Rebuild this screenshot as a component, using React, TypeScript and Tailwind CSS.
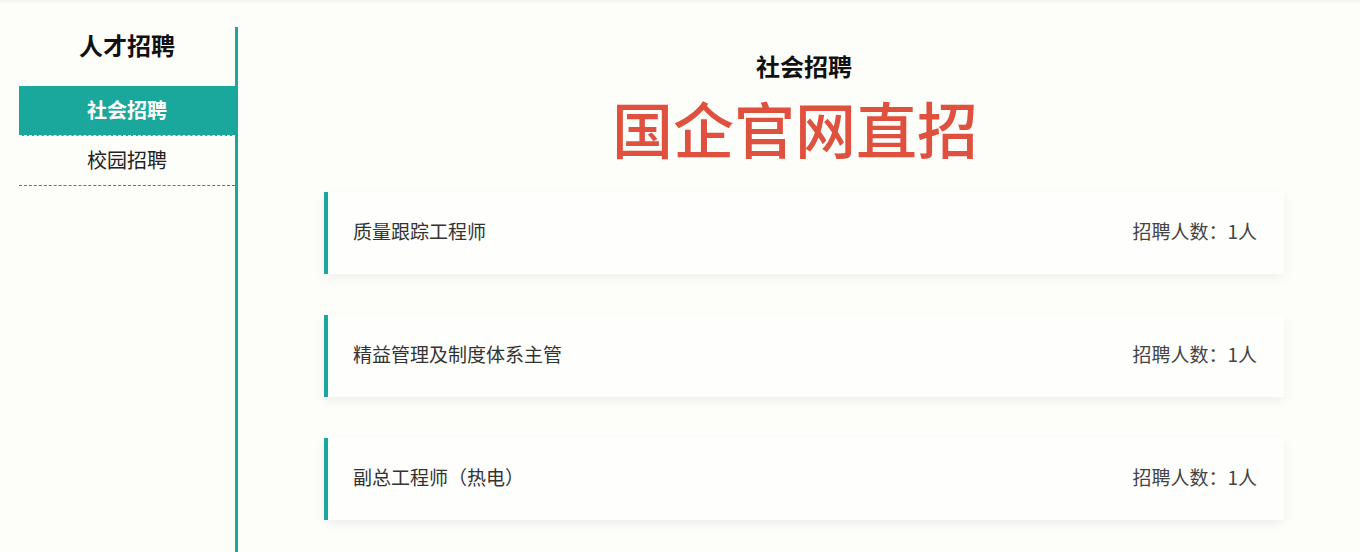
const jobs = [
  { title: '质量跟踪工程师', count: 1 },
  { title: '精益管理及制度体系主管', count: 1 },
  { title: '副总工程师（热电）', count: 1 },
];

const font = { fontFamily: '"Noto Sans CJK SC", "Noto Sans", sans-serif' };

export default function App() {
  return (
    <div className="h-[552px] overflow-hidden bg-[#fdfdfa] text-[#333]" style={font}>
      <div className="h-[4px] bg-gradient-to-b from-[#f2f2ef] to-[#fdfdfa]" />
      <div className="flex h-[548px] pt-[23px]">
        {/* Sidebar */}
        <aside className="ml-[19px] w-[219px] border-r-[3px] border-[#1ba89c]">
          <h2 className="h-[59px] text-center text-[24px] font-bold leading-[36px] text-[#111]">人才招聘</h2>
          <ul>
            <li className="h-[50px] bg-[#1ba89c] border-b border-dashed border-[#d9f1ee] text-center text-[20px] font-bold leading-[48px] text-white">
              社会招聘
            </li>
            <li className="h-[50px] border-b border-dashed border-[#139a8d] text-center text-[20px] leading-[48px] text-[#222]">
              校园招聘
            </li>
          </ul>
        </aside>

        {/* Main */}
        <main className="ml-[86px] w-[960px]">
          <h1 className="pt-[23px] text-center text-[24px] font-bold leading-[32px] text-[#111]">社会招聘</h1>
          <div className="mt-[10px] pr-[18px] text-center text-[61px] leading-[72px] font-medium text-[#e0503f]">
            国企官网直招
          </div>
          <div className="mt-[28px] flex flex-col gap-[41px]">
            {jobs.map((job) => (
              <div
                key={job.title}
                className="flex h-[82px] items-center justify-between border-l-4 border-[#1ba89c] bg-[#fefefc] pb-[4px] pl-[25px] pr-[27px] shadow-[0_4px_10px_rgba(0,0,0,0.06)]"
              >
                <span className="text-[19px] text-[#333]">{job.title}</span>
                <span className="text-[19px] text-[#444]">招聘人数：{job.count}人</span>
              </div>
            ))}
          </div>
        </main>
      </div>
    </div>
  );
}
